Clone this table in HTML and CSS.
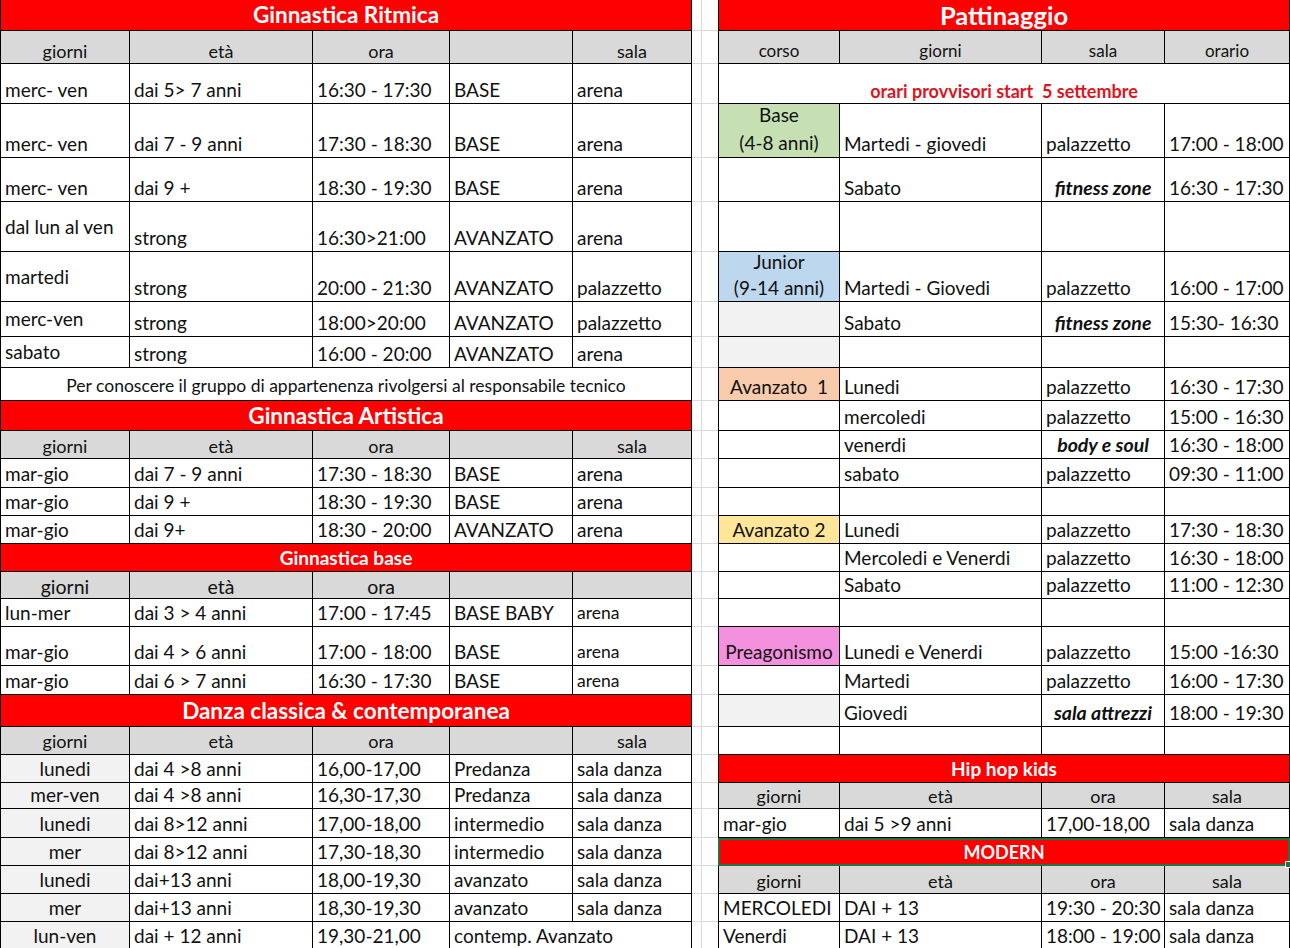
FILE: index.html
```html
<!DOCTYPE html>
<html lang="it">
<head>
<meta charset="utf-8">
<title>Orari corsi</title>
<link rel="stylesheet" href="styles.css">
</head>
<body>
<div class="sheet">
  <!-- r0 -->
  <div class="c fl s5 ttl t22">Ginnastica Ritmica</div><div class="g"></div><div class="c fr s4 ttl t25">Pattinaggio</div>
  <!-- r1 -->
  <div class="c fl hd">giorni</div><div class="c hd">età</div><div class="c hd">ora</div><div class="c hd"></div><div class="c hd">sala</div><div class="g"></div>
  <div class="c fr hd hr">corso</div><div class="c hd hr">giorni</div><div class="c hd hr">sala</div><div class="c hd hr">orario</div>
  <!-- r2 -->
  <div class="c fl">merc- ven</div><div class="c">dai 5&gt; 7 anni</div><div class="c">16:30 - 17:30</div><div class="c">BASE</div><div class="c">arena</div><div class="g"></div>
  <div class="c fr s4 ctr note">orari provvisori start&nbsp; 5 settembre</div>
  <!-- r3 -->
  <div class="c fl">merc- ven</div><div class="c">dai 7 - 9 anni</div><div class="c">17:30 - 18:30</div><div class="c">BASE</div><div class="c">arena</div><div class="g"></div>
  <div class="c fr ctr two green two28">Base<br>(4-8 anni)</div><div class="c">Martedi - giovedi</div><div class="c">palazzetto</div><div class="c">17:00 - 18:00</div>
  <!-- r4 -->
  <div class="c fl">merc- ven</div><div class="c">dai 9 +</div><div class="c">18:30 - 19:30</div><div class="c">BASE</div><div class="c">arena</div><div class="g"></div>
  <div class="c fr"></div><div class="c">Sabato</div><div class="c ctr bi">fitness zone</div><div class="c">16:30 - 17:30</div>
  <!-- r5 -->
  <div class="c fl up11">dal lun al ven</div><div class="c">strong</div><div class="c">16:30&gt;21:00</div><div class="c">AVANZATO</div><div class="c">arena</div><div class="g"></div>
  <div class="c fr"></div><div class="c"></div><div class="c"></div><div class="c"></div>
  <!-- r6 -->
  <div class="c fl up11">martedi</div><div class="c">strong</div><div class="c">20:00 - 21:30</div><div class="c">AVANZATO</div><div class="c">palazzetto</div><div class="g"></div>
  <div class="c fr ctr two blue">Junior<br>(9-14 anni)</div><div class="c">Martedi - Giovedi</div><div class="c">palazzetto</div><div class="c">16:00 - 17:00</div>
  <!-- r7 -->
  <div class="c fl up4">merc-ven</div><div class="c">strong</div><div class="c">18:00&gt;20:00</div><div class="c">AVANZATO</div><div class="c">palazzetto</div><div class="g"></div>
  <div class="c fr lg"></div><div class="c">Sabato</div><div class="c ctr bi">fitness zone</div><div class="c">15:30- 16:30</div>
  <!-- r8 -->
  <div class="c fl up2">sabato</div><div class="c">strong</div><div class="c">16:00 - 20:00</div><div class="c">AVANZATO</div><div class="c">arena</div><div class="g"></div>
  <div class="c fr lg"></div><div class="c"></div><div class="c"></div><div class="c"></div>
  <!-- r9 -->
  <div class="c fl s5 ctr small">Per conoscere il gruppo di appartenenza rivolgersi al responsabile tecnico</div><div class="g"></div>
  <div class="c fr ctr peach">Avanzato&nbsp; 1</div><div class="c">Lunedi</div><div class="c">palazzetto</div><div class="c">16:30 - 17:30</div>
  <!-- r10 -->
  <div class="c fl s5 ttl t22">Ginnastica Artistica</div><div class="g"></div>
  <div class="c fr"></div><div class="c">mercoledi</div><div class="c">palazzetto</div><div class="c">15:00 - 16:30</div>
  <!-- r11 -->
  <div class="c fl hd">giorni</div><div class="c hd">età</div><div class="c hd">ora</div><div class="c hd"></div><div class="c hd">sala</div><div class="g"></div>
  <div class="c fr"></div><div class="c">venerdi</div><div class="c ctr bi">body e soul</div><div class="c">16:30 - 18:00</div>
  <!-- r12 -->
  <div class="c fl">mar-gio</div><div class="c">dai 7 - 9 anni</div><div class="c">17:30 - 18:30</div><div class="c">BASE</div><div class="c">arena</div><div class="g"></div>
  <div class="c fr"></div><div class="c">sabato</div><div class="c">palazzetto</div><div class="c">09:30 - 11:00</div>
  <!-- r13 -->
  <div class="c fl">mar-gio</div><div class="c">dai 9 +</div><div class="c">18:30 - 19:30</div><div class="c">BASE</div><div class="c">arena</div><div class="g"></div>
  <div class="c fr"></div><div class="c"></div><div class="c"></div><div class="c"></div>
  <!-- r14 -->
  <div class="c fl">mar-gio</div><div class="c">dai 9+</div><div class="c">18:30 - 20:00</div><div class="c">AVANZATO</div><div class="c">arena</div><div class="g"></div>
  <div class="c fr ctr yellow">Avanzato 2</div><div class="c">Lunedi</div><div class="c">palazzetto</div><div class="c">17:30 - 18:30</div>
  <!-- r15 -->
  <div class="c fl s5 ttl t19">Ginnastica base</div><div class="g"></div>
  <div class="c fr"></div><div class="c">Mercoledi e Venerdi</div><div class="c">palazzetto</div><div class="c">16:30 - 18:00</div>
  <!-- r16 -->
  <div class="c fl hd big">giorni</div><div class="c hd big">età</div><div class="c hd big">ora</div><div class="c hd"></div><div class="c hd"></div><div class="g"></div>
  <div class="c fr"></div><div class="c">Sabato</div><div class="c">palazzetto</div><div class="c">11:00 - 12:30</div>
  <!-- r17 -->
  <div class="c fl">lun-mer</div><div class="c">dai 3 &gt; 4 anni</div><div class="c">17:00 - 17:45</div><div class="c">BASE BABY</div><div class="c sm">arena</div><div class="g"></div>
  <div class="c fr"></div><div class="c"></div><div class="c"></div><div class="c"></div>
  <!-- r18 -->
  <div class="c fl">mar-gio</div><div class="c">dai 4 &gt; 6 anni</div><div class="c">17:00 - 18:00</div><div class="c">BASE</div><div class="c sm">arena</div><div class="g"></div>
  <div class="c fr ctr pink">Preagonismo</div><div class="c">Lunedi e Venerdi</div><div class="c">palazzetto</div><div class="c">15:00 -16:30</div>
  <!-- r19 -->
  <div class="c fl">mar-gio</div><div class="c">dai 6 &gt; 7 anni</div><div class="c">16:30 - 17:30</div><div class="c">BASE</div><div class="c sm">arena</div><div class="g"></div>
  <div class="c fr"></div><div class="c">Martedi</div><div class="c">palazzetto</div><div class="c">16:00 - 17:30</div>
  <!-- r20 -->
  <div class="c fl s5 ttl t22">Danza classica &amp; contemporanea</div><div class="g"></div>
  <div class="c fr lg"></div><div class="c">Giovedi</div><div class="c ctr bi">sala attrezzi</div><div class="c">18:00 - 19:30</div>
  <!-- r21 -->
  <div class="c fl hd dh">giorni</div><div class="c hd dh">età</div><div class="c hd dh">ora</div><div class="c hd"></div><div class="c hd dh">sala</div><div class="g"></div>
  <div class="c fr"></div><div class="c"></div><div class="c"></div><div class="c"></div>
  <!-- r22 -->
  <div class="c fl lg ctr">lunedi</div><div class="c">dai 4 &gt;8 anni</div><div class="c">16,00-17,00</div><div class="c">Predanza</div><div class="c">sala danza</div><div class="g"></div>
  <div class="c fr s4 ttl t19">Hip hop kids</div>
  <!-- r23 -->
  <div class="c fl lg ctr">mer-ven</div><div class="c">dai 4 &gt;8 anni</div><div class="c">16,30-17,30</div><div class="c">Predanza</div><div class="c">sala danza</div><div class="g"></div>
  <div class="c fr hd">giorni</div><div class="c hd">età</div><div class="c hd">ora</div><div class="c hd">sala</div>
  <!-- r24 -->
  <div class="c fl lg ctr">lunedi</div><div class="c">dai 8&gt;12 anni</div><div class="c">17,00-18,00</div><div class="c">intermedio</div><div class="c">sala danza</div><div class="g"></div>
  <div class="c fr">mar-gio</div><div class="c">dai 5 &gt;9 anni</div><div class="c">17,00-18,00</div><div class="c">sala danza</div>
  <!-- r25 -->
  <div class="c fl lg ctr">mer</div><div class="c">dai 8&gt;12 anni</div><div class="c">17,30-18,30</div><div class="c">intermedio</div><div class="c">sala danza</div><div class="g"></div>
  <div class="c fr s4 ttl t18 sel">MODERN</div>
  <!-- r26 -->
  <div class="c fl lg ctr">lunedi</div><div class="c">dai+13 anni</div><div class="c">18,00-19,30</div><div class="c">avanzato</div><div class="c">sala danza</div><div class="g"></div>
  <div class="c fr hd">giorni</div><div class="c hd">età</div><div class="c hd">ora</div><div class="c hd">sala</div>
  <!-- r27 -->
  <div class="c fl lg ctr">mer</div><div class="c">dai+13 anni</div><div class="c">18,30-19,30</div><div class="c">avanzato</div><div class="c">sala danza</div><div class="g"></div>
  <div class="c fr">MERCOLEDI</div><div class="c">DAI + 13</div><div class="c">19:30 - 20:30</div><div class="c">sala danza</div>
  <!-- r28 -->
  <div class="c fl lg ctr">lun-ven</div><div class="c">dai + 12 anni</div><div class="c">19,30-21,00</div><div class="c s2">contemp. Avanzato</div><div class="g"></div>
  <div class="c fr">Venerdi</div><div class="c">DAI + 13</div><div class="c">18:00 - 19:00</div><div class="c">sala danza</div>
</div>
</body>
</html>
```

FILE: styles.css
```css
html, body {
  margin: 0;
  padding: 0;
  background: #ffffff;
}
body {
  font-family: Lato, "Liberation Sans", sans-serif;
  font-size: 19px;
  color: #111111;
  overflow: hidden;
}
.sheet {
  display: grid;
  grid-template-columns: 130px 183px 137px 123px 119px 26px 122px 202px 123px 125px;
  grid-template-rows: 31px 33px 40px 54px 44px 50px 50px 35px 31px 33px 30px 28px 29px 28px 28px 28px 27px 28px 39px 29px 32px 28px 28px 26px 29px 28px 28px 28px 28px;
  width: 1290px;
}
.c {
  box-sizing: border-box;
  display: flex;
  align-items: flex-end;
  padding: 0 4px 2px 4px;
  border-right: 1px solid #000;
  border-bottom: 1px solid #000;
  white-space: nowrap;
  line-height: 22px;
  min-width: 0;
}
.fl, .fr { border-left: 1px solid #000; }
.g {
  box-sizing: border-box;
  border-bottom: 1px solid #dadada;
  background: linear-gradient(to right, transparent 9px, #dadada 9px, #dadada 10px, transparent 10px);
}
.s5 { grid-column: span 5; }
.s4 { grid-column: span 4; }
.s2 { grid-column: span 2; }
.ctr { justify-content: center; text-align: center; }
.hd {
  background: #d9d9d9;
  justify-content: center;
  font-size: 18px;
  padding-bottom: 1px;
}
.hr { font-size: 17px; }
.big { font-size: 19.5px; padding-bottom: 0; }
.dh { padding-bottom: 2px; }
.ttl {
  background: #ff0000;
  color: #ffffff;
  font-weight: 700;
  justify-content: center;
  align-items: center;
  padding: 0;
}
.t22 { font-size: 22.5px; }
.t25 { font-size: 25.5px; }
.t19 { font-size: 19px; }
.t18 { font-size: 18px; }
.note {
  color: #e0141e;
  font-weight: 700;
  font-size: 18px;
  padding-bottom: 1px;
}
.small { font-size: 17.5px; padding-bottom: 3px; }
.sm { font-size: 17.5px; }
.two { line-height: 26px; padding-bottom: 0; }
.two28 { line-height: 28px; }
.green { background: #c6e0b4; }
.blue { background: #bdd7ee; }
.peach { background: #f8cbad; }
.yellow { background: #ffe699; }
.pink { background: #f391df; }
.lg { background: #f2f2f2; }
.bi { font-weight: 700; font-style: italic; font-size: 19.5px; }
.up11 { padding-bottom: 13px; }
.up4 { padding-bottom: 6px; }
.up2 { padding-bottom: 4px; }
.sel {
  position: relative;
  border: 2px solid #217346;
}
.sel::after {
  content: "";
  position: absolute;
  right: -4px;
  bottom: -4px;
  width: 5px;
  height: 5px;
  background: #217346;
  border: 1px solid #ffffff;
}
```
